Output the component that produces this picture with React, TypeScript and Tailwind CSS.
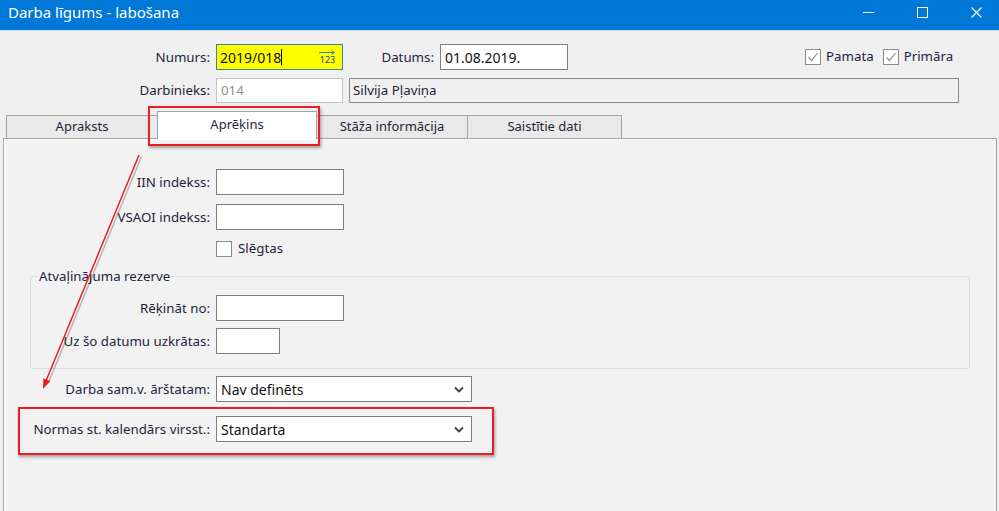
import { ReactNode } from "react"

const label = "text-[13.3px] leading-[17px] text-[#1d1f3b] text-right whitespace-nowrap"

function Field({ className = "", children }: { className?: string; children?: ReactNode }) {
  return (
    <div
      className={`h-[26px] bg-white border border-[#7f7f7f] flex items-center pl-[4px] text-[14px] text-[#111] ${className}`}
    >
      {children}
    </div>
  )
}

function Check({ checked }: { checked?: boolean }) {
  return (
    <div className="w-[16px] h-[16px] bg-white border border-[#8a8a8a] flex items-center justify-center">
      {checked && (
        <svg width="12" height="10" viewBox="0 0 12 10">
          <path d="M1.5 5.5 L4.5 8.5 L10.5 1" fill="none" stroke="#8c8c8c" strokeWidth="1.2" />
        </svg>
      )}
    </div>
  )
}

function Row({
  text,
  labelW,
  className = "",
  children,
}: {
  text: string
  labelW: string
  className?: string
  children: ReactNode
}) {
  return (
    <div className={`flex items-center gap-[6px] ${className}`}>
      <div className={`${label} ${labelW}`}>{text}</div>
      {children}
    </div>
  )
}

function Select({ value }: { value: string }) {
  return (
    <Field className="w-[256px] justify-between pr-[7px]">
      <span>{value}</span>
      <svg width="10" height="7" viewBox="0 0 10 7">
        <path d="M1 1.5 L5 5.5 L9 1.5" fill="none" stroke="#404040" strokeWidth="1.8" />
      </svg>
    </Field>
  )
}

const tabs = [
  { title: "Apraksts", w: "w-[152px]", active: false },
  { title: "Aprēķins", w: "w-[160px]", active: true },
  { title: "Stāža informācija", w: "w-[152px]", active: false },
  { title: "Saistītie dati", w: "w-[155px]", active: false },
]

export default function App() {
  return (
    <div className="relative w-[999px] h-[511px] overflow-hidden bg-[#f0f0f0] flex flex-col font-['Noto_Sans',sans-serif]">
      {/* title bar */}
      <div className="h-[31px] bg-[#0078d7] border-b border-[#cfdcea] flex items-start shrink-0">
        <div className="h-[24px] flex items-center pl-[8px] text-[15px] text-white">Darba līgums - labošana</div>
        <div className="ml-auto h-[24px] flex items-center gap-[43px] pr-[17px]">
          <svg width="11" height="11" viewBox="0 0 11 11">
            <path d="M0 5.5 H11" stroke="#fff" strokeWidth="1" />
          </svg>
          <svg width="11" height="11" viewBox="0 0 11 11">
            <rect x="0.5" y="0.5" width="10" height="10" fill="none" stroke="#fff" strokeWidth="1" />
          </svg>
          <svg width="11" height="11" viewBox="0 0 11 11">
            <path d="M0.5 0.5 L10.5 10.5 M10.5 0.5 L0.5 10.5" stroke="#fff" strokeWidth="1.1" />
          </svg>
        </div>
      </div>

      {/* header fields */}
      <div className="pt-[13px] shrink-0">
        <div className="flex items-center">
          <div className={`${label} w-[210px]`}>Numurs:</div>
          <div className="ml-[6px] w-[127px] h-[26px] bg-[#ffff00] border border-[#3c7fb1] flex items-center pl-[3px] pr-[6px] text-[14px] text-[#111]">
            <span>2019/018</span>
            <span className="w-px h-[16px] bg-black" />
            <div className="ml-auto flex flex-col items-center leading-none">
              <svg width="17" height="5" viewBox="0 0 17 5">
                <path d="M0 2.5 H15 M12.5 0.5 L15.5 2.5 L12.5 4.5" fill="none" stroke="#1f8fb0" strokeWidth="1" />
              </svg>
              <span className="text-[9px] text-[#1b3f8f] leading-[10px]">123</span>
            </div>
          </div>
          <div className={`${label} w-[91px]`}>Datums:</div>
          <Field className="ml-[6px] w-[128px]">01.08.2019.</Field>
          <div className="ml-[237px] flex items-center">
            <Check checked />
            <span className="ml-[5px] text-[13.3px] text-[#1d1f3b]">Pamata</span>
            <div className="ml-[9px]">
              <Check checked />
            </div>
            <span className="ml-[5px] text-[13.3px] text-[#1d1f3b]">Primāra</span>
          </div>
        </div>
        <div className="flex items-center mt-[8px]">
          <div className={`${label} w-[210px]`}>Darbinieks:</div>
          <div className="ml-[6px] w-[127px] h-[25px] bg-white border border-[#c4c4c4] flex items-center pl-[4px] text-[13.3px] text-[#8f8f8f]">
            014
          </div>
          <div className="ml-[6px] w-[610px] h-[25px] bg-[#f0f0f0] border border-[#8c8c8c] flex items-center pl-[3px] text-[13.3px] text-[#1d1f3b]">
            Silvija Pļaviņa
          </div>
        </div>
      </div>

      {/* tabs */}
      <div className="mt-[8px] h-[27px] flex items-end pl-[6px] shrink-0">
        {tabs.map((t, i) => (
          <div
            key={t.title}
            className={`${t.w} ${i > 0 ? "-ml-px" : ""} flex items-center justify-center text-[13px] text-[#1d1f3b] border-l border-t border-r border-[#a3a3a3] ${
              t.active ? "relative z-10 h-[28px] -mb-px bg-white pb-[1px]" : "h-[23px] bg-[#e9e9e9]"
            }`}
          >
            {t.title}
          </div>
        ))}
      </div>

      {/* tab page */}
      <div className="flex-1 ml-[3px] mr-[2px] border-l border-t border-r border-[#a3a3a3] bg-[#f2f2f2] shadow-[inset_1px_1px_0_#ffffff] pt-[30px]">
        <Row text="IIN indekss:" labelW="w-[206px]">
          <Field className="w-[128px]" />
        </Row>
        <Row text="VSAOI indekss:" labelW="w-[206px]" className="mt-[9px]">
          <Field className="w-[128px]" />
        </Row>
        <div className="mt-[10px] h-[17px] flex items-center pl-[212px]">
          <Check />
          <span className="ml-[6px] text-[13.3px] text-[#1d1f3b]">Slēgtas</span>
        </div>

        <fieldset className="mt-[11px] ml-[26px] w-[940px] border border-[#d6dee7] rounded-[3px] pb-[14px]">
          <legend className="ml-[7px] px-[1px] text-[13.3px] leading-[17px] text-[#1d1f3b]">Atvaļinājuma rezerve</legend>
          <Row text="Rēķināt no:" labelW="w-[179px]" className="mt-[10px]">
            <Field className="w-[128px]" />
          </Row>
          <Row text="Uz šo datumu uzkrātas:" labelW="w-[179px]" className="mt-[7px]">
            <Field className="w-[64px]" />
          </Row>
        </fieldset>

        <Row text="Darba sam.v. ārštatam:" labelW="w-[206px]" className="mt-[7px]">
          <Select value="Nav definēts" />
        </Row>
        <Row text="Normas st. kalendārs virsst.:" labelW="w-[206px]" className="mt-[14px]">
          <Select value="Standarta" />
        </Row>
      </div>

      {/* red annotations */}
      <div className="absolute left-[148px] top-[106px] w-[172px] h-[40px] border-2 border-[#ec1c24] shadow-[1px_2px_3px_rgba(0,0,0,0.35)] pointer-events-none" />
      <div className="absolute left-[18px] top-[407px] w-[476px] h-[48px] border-2 border-[#ec1c24] shadow-[1px_2px_3px_rgba(0,0,0,0.35)] pointer-events-none" />
      <svg className="absolute left-0 top-0 pointer-events-none" width="999" height="511" viewBox="0 0 999 511">
        <line x1="140" y1="155" x2="47" y2="381" stroke="rgba(0,0,0,0.25)" strokeWidth="1.5" transform="translate(1.5,1.5)" />
        <line x1="139" y1="155" x2="46" y2="381" stroke="#ec1c24" strokeWidth="1.5" />
        <polygon points="43,389 50.2,381.2 43.4,378.3" fill="#ec1c24" />
      </svg>
    </div>
  )
}
